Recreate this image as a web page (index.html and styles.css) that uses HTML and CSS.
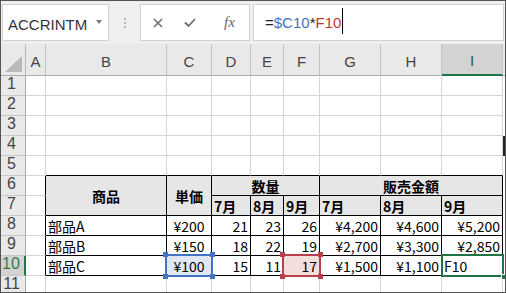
FILE: index.html
```html
<!DOCTYPE html>
<html>
<head>
    <meta charset="utf-8">
    <title>売上表</title>
    <link rel="stylesheet" href="styles.css">
</head>
<body>
    <div class="window">
        <div class="toolbar">
            <div class="name-box">
                <span>ACCRINTM</span>
                <svg class="drop" width="6" height="4" viewBox="0 0 6 4"><path d="M0 0h6L3 4z" fill="#7a7a7a"/></svg>
            </div>
            <div class="grip">
                <svg width="2" height="10" viewBox="0 0 2 10"><rect y="0" width="2" height="2" fill="#b5b5b5"/><rect y="4" width="2" height="2" fill="#b5b5b5"/><rect y="8" width="2" height="2" fill="#b5b5b5"/></svg>
            </div>
            <div class="func-box">
                <svg class="icon-cancel" width="10" height="10" viewBox="0 0 10 10"><path d="M1 1L9 9M9 1L1 9" stroke="#6f6f6f" stroke-width="1.6" fill="none"/></svg>
                <svg class="icon-enter" width="12" height="9" viewBox="0 0 12 9"><path d="M1 4.5L4.5 8L11 1" stroke="#6f6f6f" stroke-width="1.8" fill="none"/></svg>
                <span class="fx">fx</span>
            </div>
            <div class="formula">
                <span>=</span><span class="ref-b">$C10</span><span>*</span><span class="ref-r">F10</span><span class="caret"></span>
            </div>
        </div>

        <div class="sheet">
            <!-- column headers -->
            <div class="corner"><svg width="17" height="16" viewBox="0 0 17 16"><path d="M17 0V16H0z" fill="#b9b9b9"/></svg></div>
            <div class="ch">A</div>
            <div class="ch">B</div>
            <div class="ch">C</div>
            <div class="ch">D</div>
            <div class="ch">E</div>
            <div class="ch">F</div>
            <div class="ch">G</div>
            <div class="ch">H</div>
            <div class="ch ch-sel">I</div>
            <div class="ch-end"></div>

            <!-- 1 -->
            <div class="rh">1</div>
            <div class="c"></div><div class="c"></div><div class="c"></div><div class="c"></div><div class="c"></div>
            <div class="c"></div><div class="c"></div><div class="c"></div><div class="c"></div>
            <div class="end"></div>

            <!-- 2 -->
            <div class="rh">2</div>
            <div class="c"></div><div class="c"></div><div class="c"></div><div class="c"></div><div class="c"></div>
            <div class="c"></div><div class="c"></div><div class="c"></div><div class="c"></div>
            <div class="end"></div>

            <!-- 3 -->
            <div class="rh">3</div>
            <div class="c"></div><div class="c"></div><div class="c"></div><div class="c"></div><div class="c"></div>
            <div class="c"></div><div class="c"></div><div class="c"></div><div class="c"></div>
            <div class="end"></div>

            <!-- 4 -->
            <div class="rh">4</div>
            <div class="c"></div><div class="c"></div><div class="c"></div><div class="c"></div><div class="c"></div>
            <div class="c"></div><div class="c"></div><div class="c"></div><div class="c"></div>
            <div class="end split"></div>

            <!-- 5 -->
            <div class="rh">5</div>
            <div class="c"></div>
            <div class="c top"></div><div class="c top"></div><div class="c top"></div><div class="c top"></div>
            <div class="c top"></div><div class="c top"></div><div class="c top"></div><div class="c top"></div>
            <div class="end"></div>

            <!-- 6 -->
            <div class="rh">6</div>
            <div class="c lft"></div>
            <div class="c t th mid span-r2">商品</div>
            <div class="c t th mid span-r2">単価</div>
            <div class="c t th mid span-c3">数量</div>
            <div class="c t th mid span-c3">販売金額</div>
            <div class="end"></div>

            <!-- 7 -->
            <div class="rh">7</div>
            <div class="c lft"></div>
            <div class="c t th">7月</div>
            <div class="c t th">8月</div>
            <div class="c t th">9月</div>
            <div class="c t th">7月</div>
            <div class="c t th">8月</div>
            <div class="c t th">9月</div>
            <div class="end"></div>

            <!-- 8 -->
            <div class="rh">8</div>
            <div class="c lft"></div>
            <div class="c t">部品A</div>
            <div class="c t ctr">¥200</div>
            <div class="c t n">21</div>
            <div class="c t n">23</div>
            <div class="c t n">26</div>
            <div class="c t n">¥4,200</div>
            <div class="c t n">¥4,600</div>
            <div class="c t n">¥5,200</div>
            <div class="end"></div>

            <!-- 9 -->
            <div class="rh">9</div>
            <div class="c lft"></div>
            <div class="c t">部品B</div>
            <div class="c t ctr">¥150</div>
            <div class="c t n">18</div>
            <div class="c t n">22</div>
            <div class="c t n">19</div>
            <div class="c t n">¥2,700</div>
            <div class="c t n">¥3,300</div>
            <div class="c t n">¥2,850</div>
            <div class="end"></div>

            <!-- 10 -->
            <div class="rh rh-sel">10</div>
            <div class="c lft"></div>
            <div class="c t">部品C</div>
            <div class="c t ctr pick pick-blue">¥100<span class="ref ref-blue"><i class="tl"></i><i class="tr"></i><i class="bl"></i><i class="br"></i></span></div>
            <div class="c t n">15</div>
            <div class="c t n">11</div>
            <div class="c t n pick pick-red">17<span class="ref ref-red"><i class="tl"></i><i class="tr"></i><i class="bl"></i><i class="br"></i></span></div>
            <div class="c t n">¥1,500</div>
            <div class="c t n">¥1,100</div>
            <div class="c t pick">F10<span class="active"><i class="fill"></i></span></div>
            <div class="end"></div>

            <!-- 11 -->
            <div class="rh">11</div>
            <div class="c"></div><div class="c"></div><div class="c"></div><div class="c"></div><div class="c"></div>
            <div class="c"></div><div class="c"></div><div class="c"></div><div class="c"></div>
            <div class="end"></div>
        </div>
    </div>
</body>
</html>
```

FILE: styles.css
```css
* {
    box-sizing: border-box;
}

body {
    margin: 0;
    background-color: #fff;
    font-family: "Noto Sans CJK JP", "Liberation Sans", sans-serif;
}

.window {
    width: 506px;
    height: 293px;
    border: 1px solid #555;
    overflow: hidden;
    background-color: #fff;
}

/* formula bar */
.toolbar {
    height: 43px;
    background-color: #efefef;
    display: flex;
    align-items: flex-start;
    padding: 3px 0 0 1px;
}

.name-box {
    width: 107px;
    height: 37px;
    background-color: #fff;
    border: 1px solid #d2d2d2;
    display: flex;
    align-items: center;
    justify-content: space-between;
    padding: 4px 6px 0 5px;
    font: 15px "Liberation Sans", Arial, sans-serif;
    color: #333;
}

.name-box .drop {
    margin-top: -6px;
}

.grip {
    width: 31px;
    height: 37px;
    display: flex;
    align-items: center;
    justify-content: center;
}

.func-box {
    width: 110px;
    height: 37px;
    background-color: #fff;
    border: 1px solid #d2d2d2;
    display: flex;
    align-items: center;
    padding-left: 12px;
}

.icon-enter {
    margin-left: 21px;
}

.fx {
    margin-left: 28px;
    font: italic 15px "Liberation Serif", serif;
    color: #666;
}

.formula {
    width: 251px;
    height: 37px;
    margin-left: 3px;
    background-color: #fff;
    border: 1px solid #d2d2d2;
    display: flex;
    align-items: center;
    padding-left: 11px;
    font: 15px "Liberation Sans", Arial, sans-serif;
    color: #222;
}

.ref-b {
    color: #3f72c2;
}

.ref-r {
    color: #c0392f;
}

.caret {
    width: 1px;
    height: 26px;
    margin: -4px 0 0 1px;
    background-color: #000;
}

/* sheet */
.sheet {
    display: grid;
    grid-template-columns: 25px 20px 121px 45px 39px 33px 36px 61px 61px 61px 2px;
    grid-template-rows: 32px repeat(11, 20px);
}

.corner {
    background-color: #e9e9e9;
    border-right: 1px solid #b8b8b8;
    border-bottom: 1px solid #ababab;
    display: flex;
    align-items: flex-end;
    justify-content: flex-end;
    padding: 0 3px 3px 0;
}

.ch {
    background-color: #e9e9e9;
    border-right: 1px solid #c4c4c4;
    border-bottom: 1px solid #ababab;
    display: flex;
    align-items: center;
    justify-content: center;
    padding-top: 3px;
    font: 15px "Liberation Sans", Arial, sans-serif;
    color: #444;
}

.ch-sel {
    background-color: #d3d3d3;
    border-bottom: 2px solid #217346;
    color: #1e5e3a;
}

.ch-end {
    background-color: #e9e9e9;
    border-bottom: 1px solid #ababab;
}

.rh {
    background-color: #e9e9e9;
    border-right: 1px solid #ababab;
    border-bottom: 1px solid #c8c8c8;
    text-align: center;
    padding-right: 3px;
    font: 16px "Liberation Sans", Arial, sans-serif;
    line-height: 15px;
    color: #444;
}

.rh-sel {
    background-color: #d3d3d3;
    border-right: 2px solid #217346;
    color: #2e7a50;
}

.c {
    border-right: 1px solid #d4d4d4;
    border-bottom: 1px solid #d4d4d4;
    padding: 1px 2px 0;
    font-size: 14px;
    line-height: 18px;
    color: #000;
    white-space: nowrap;
    overflow: hidden;
}

.end.split {
    border-top: 1px solid #222;
    border-bottom: 1px solid #222;
    border-left: 2px solid #222;
}

/* table borders */
.c.top {
    border-bottom-color: #000;
}

.c.lft {
    border-right-color: #000;
}

.c.t {
    border-right-color: #000;
    border-bottom-color: #000;
}

.th {
    background-color: #e7e6e6;
    font-weight: bold;
}

.mid {
    display: flex;
    align-items: center;
    justify-content: center;
    padding-top: 0;
}

.span-r2 {
    grid-row: span 2;
}

.span-c3 {
    grid-column: span 3;
}

.n {
    text-align: right;
}

.ctr {
    text-align: center;
}

/* reference highlights */
.pick {
    position: relative;
    overflow: visible;
}

.pick-blue {
    background-color: #dfe7f3;
}

.pick-red {
    background-color: #f3dede;
}

.ref {
    position: absolute;
    top: -2px;
    right: -2px;
    bottom: -2px;
    left: -2px;
    border: 2px solid;
}

.ref-blue {
    border-color: #4472c4;
}

.ref-red {
    border-color: #b8404b;
}

.ref i {
    position: absolute;
    width: 5px;
    height: 5px;
}

.ref-blue i {
    background-color: #4472c4;
}

.ref-red i {
    background-color: #b8404b;
}

.ref .tl { left: -4px; top: -4px; }
.ref .tr { right: -4px; top: -4px; }
.ref .bl { left: -4px; bottom: -4px; }
.ref .br { right: -4px; bottom: -4px; }

.active {
    position: absolute;
    top: -2px;
    right: -2px;
    bottom: -2px;
    left: -1px;
    border: 2px solid #217346;
}

.active .fill {
    position: absolute;
    right: -5px;
    bottom: -5px;
    width: 6px;
    height: 6px;
    background-color: #217346;
    border: 1px solid #fff;
}
```
